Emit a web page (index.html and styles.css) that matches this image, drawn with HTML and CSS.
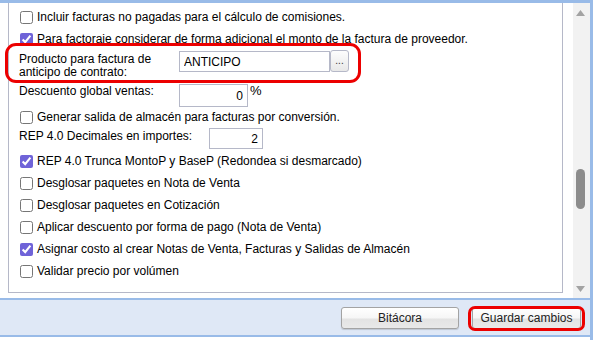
FILE: index.html
```html
<!DOCTYPE html>
<html lang="es">
<head>
    <meta charset="UTF-8">
    <meta name="viewport" content="width=device-width, initial-scale=1.0">
    <title>Configuración de ventas</title>
    <link rel="stylesheet" href="styles.css">
</head>
<body>

    <div class="window">
        <div class="body-area">
            <div class="panel-wrap">
                <div class="panel">
                    <label class="check-row"><input type="checkbox"> Incluir facturas no pagadas para el cálculo de comisiones.</label>
                    <label class="check-row"><input type="checkbox" checked> Para factoraje considerar de forma adicional el monto de la factura de proveedor.</label>

                    <div class="field-row producto marked">
                        <span class="field-label">Producto para factura de<br>anticipo de contrato:</span>
                        <input class="text-field producto-input" type="text" value="ANTICIPO">
                        <button class="trigger">...</button>
                    </div>

                    <div class="field-row descuento">
                        <span class="field-label">Descuento global ventas:</span>
                        <input class="text-field num-field descuento-input" type="text" value="0">
                        <span class="unit">%</span>
                    </div>

                    <label class="check-row"><input type="checkbox"> Generar salida de almacén para facturas por conversión.</label>

                    <div class="field-row decimales">
                        <span class="field-label">REP 4.0 Decimales en importes:</span>
                        <input class="text-field num-field decimales-input" type="text" value="2">
                    </div>

                    <label class="check-row"><input type="checkbox" checked> REP 4.0 Trunca MontoP y BaseP (Redondea si desmarcado)</label>
                    <label class="check-row"><input type="checkbox"> Desglosar paquetes en Nota de Venta</label>
                    <label class="check-row"><input type="checkbox"> Desglosar paquetes en Cotización</label>
                    <label class="check-row"><input type="checkbox"> Aplicar descuento por forma de pago (Nota de Venta)</label>
                    <label class="check-row"><input type="checkbox" checked> Asignar costo al crear Notas de Venta, Facturas y Salidas de Almacén</label>
                    <label class="check-row"><input type="checkbox"> Validar precio por volúmen</label>
                </div>
            </div>

            <div class="scrollbar">
                <svg class="arrow-up" width="9" height="6" viewBox="0 0 9 6"><polygon points="4.5,0 9,6 0,6" fill="#a3a3a3"/></svg>
                <div class="thumb"></div>
                <svg class="arrow-down" width="9" height="6" viewBox="0 0 9 6"><polygon points="0,0 9,0 4.5,6" fill="#a3a3a3"/></svg>
            </div>
        </div>

        <div class="toolbar">
            <button class="btn btn-log">Bitácora</button>
            <button class="btn btn-save marked">Guardar cambios</button>
        </div>
    </div>

</body>
</html>
```

FILE: styles.css
```css
/* Reset */
*, *::before, *::after {
    margin: 0;
    padding: 0;
    box-sizing: border-box;
    font-family: "Liberation Sans", Arial, sans-serif;
}

body {
    width: 593px;
    height: 340px;
    overflow: hidden;
    background: #fff;
    color: #000;
    font-size: 12px;
}

/* Ventana */
.window {
    height: 340px;
    border-top: 3px solid #99bbe8;
    border-right: 3px solid #99bbe8;
}

.body-area {
    display: flex;
    height: 295px;
}

.panel-wrap {
    flex: 1;
    padding: 0 10px 0 8px;
}

/* Fieldset */
.panel {
    height: 290px;
    border: 1px solid #b5b8c8;
    border-top: none;
    padding: 3px 0 0 10px;
}

/* Filas con checkbox */
.check-row {
    display: flex;
    align-items: center;
    gap: 4px;
    height: 22px;
    padding-left: 1px;
    white-space: nowrap;
}

.check-row input {
    width: 13px;
    height: 13px;
    margin: 0;
    accent-color: #6f63d8;
    flex: none;
}

/* Filas con campo */
.field-row {
    display: flex;
    align-items: flex-start;
    white-space: nowrap;
}

.field-label {
    line-height: 13px;
    padding-top: 2px;
}

.text-field {
    border: 1px solid #b5b8c8;
    background: #fff;
    font-size: 12px;
    padding: 0 4px;
    color: #000;
    outline: none;
}

.num-field {
    text-align: right;
}

.producto {
    margin-top: 1px;
    height: 28px;
}

.producto .field-label {
    width: 160px;
}

.producto-input {
    width: 151px;
    height: 21px;
}

.trigger {
    width: 19px;
    height: 22px;
    margin-top: -1px;
    border: 1px solid #b5b8c8;
    border-radius: 3px;
    background: linear-gradient(#fdfdfd, #e8e8e8);
    font-size: 10px;
    line-height: 16px;
    color: #333;
}

.descuento {
    margin-top: 5px;
    height: 22px;
}

.descuento .field-label {
    width: 160px;
    padding-top: 1px;
}

.descuento-input {
    width: 69px;
    height: 23px;
}

.unit {
    margin-left: 2px;
    font-size: 13px;
    line-height: 14px;
}

.decimales {
    height: 22px;
}

.decimales .field-label {
    width: 190px;
}

.decimales-input {
    width: 54px;
    height: 21px;
}

/* Marcas rojas */
.marked {
    position: relative;
}

.producto.marked::after {
    content: "";
    position: absolute;
    left: -14px;
    top: -8px;
    width: 356px;
    height: 40px;
    border: 3px solid #ec0000;
    border-radius: 11px;
}

.btn-save.marked::after {
    content: "";
    position: absolute;
    left: -5px;
    top: -2px;
    right: -5px;
    bottom: -3px;
    border: 3px solid #ec0000;
    border-radius: 7px;
}

/* Barra de desplazamiento */
.scrollbar {
    width: 17px;
    background: #f2f2f2;
    display: flex;
    flex-direction: column;
}

.arrow-up {
    display: block;
    margin: 7px 0 0 3px;
}

.thumb {
    width: 9px;
    height: 40px;
    margin: 153px 0 0 3px;
    background: #8c8c8c;
    border-radius: 5px;
}

.arrow-down {
    display: block;
    margin: auto 0 6px 3px;
}

/* Barra inferior */
.toolbar {
    height: 39px;
    background: #dfe8f6;
    border-top: 2px solid #99bbe8;
    border-bottom: 2px solid #99bbe8;
    display: flex;
    justify-content: flex-end;
    align-items: center;
    gap: 13px;
    padding-right: 9px;
}

.btn {
    height: 22px;
    border: 1px solid #a3a3a3;
    border-radius: 3px;
    background: linear-gradient(#ffffff 0%, #f6f6f6 50%, #e3e3e3 55%, #e9e9e9 100%);
    box-shadow: 0 1px 1px rgba(0, 0, 0, 0.15);
    font-size: 12px;
    color: #222;
}

.btn-log {
    width: 118px;
}

.btn-save {
    width: 109px;
}
```
